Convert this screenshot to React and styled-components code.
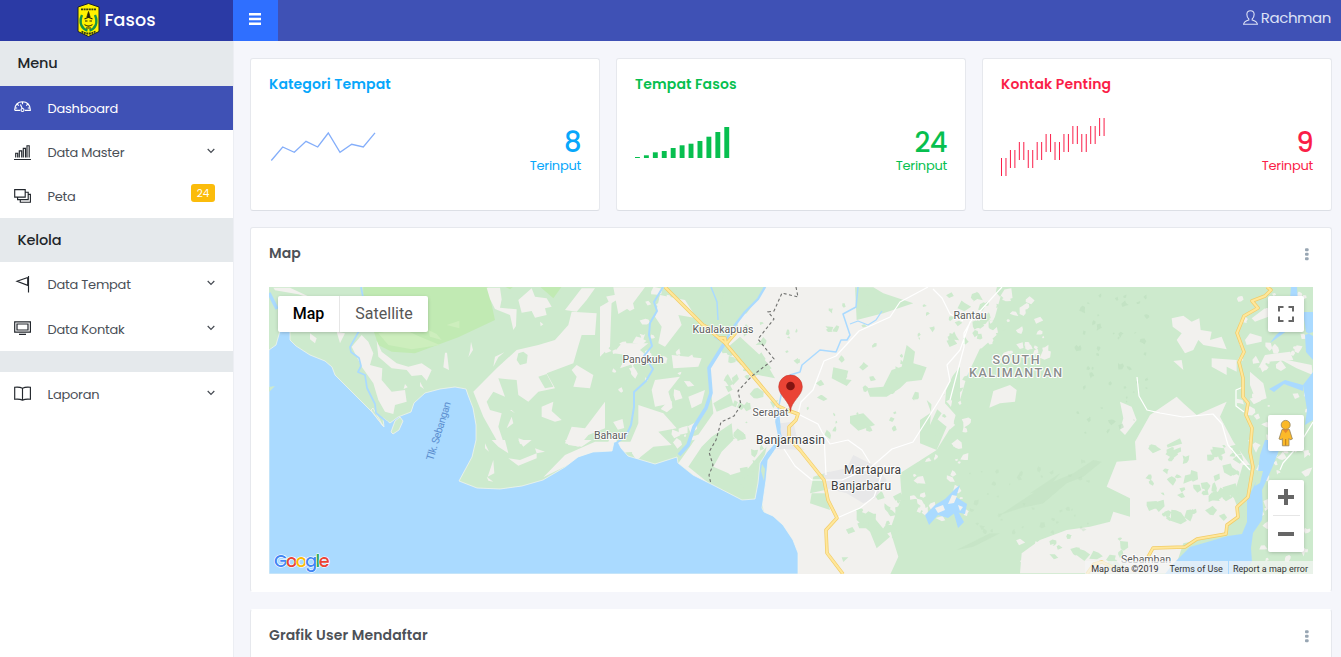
import React from 'react';
import styled, { createGlobalStyle } from 'styled-components';

const Global = createGlobalStyle`
  * { box-sizing: border-box; }
  body {
    margin: 0;
    background: #f5f6fb;
    font-family: Poppins, Inter, "Open Sans", sans-serif;
    font-size: 13px;
    color: #4d5157;
    overflow: hidden;
  }
`;

const Page = styled.div`
  display: flex;
  flex-direction: column;
  height: 657px;
  overflow: hidden;
`;
const Header = styled.header`
  display: flex;
  height: 41px;
  flex: none;
  background: #3f51b5;
`;
const Brand = styled.div`
  width: 233px;
  background: #2b3aa5;
  display: flex;
  justify-content: center;
  align-items: center;
  gap: 4px;
  padding-bottom: 2px;
  color: #fff;
  font-size: 17.5px;
  font-weight: 500;
  letter-spacing: 0.1px;
`;
const Toggle = styled.button`
  width: 45px;
  border: 0;
  padding: 13px 0 0 16px;
  background: #2f6fff;
  display: flex;
  align-items: flex-start;
`;
const User = styled.div`
  margin-left: auto;
  padding: 0 10px 6px 0;
  display: flex;
  align-items: center;
  gap: 3px;
  color: #dde1f5;
  font-size: 15px;
  letter-spacing: -0.42px;
`;
const Main = styled.div`
  display: flex;
  flex: 1;
  min-height: 0;
`;
const Sidebar = styled.nav`
  width: 234px;
  flex: none;
  background: #fff;
  border-right: 1px solid #eceef3;
`;
const Section = styled.div`
  height: ${(p) => p.$h}px;
  padding-left: 17.5px;
  line-height: 45px;
  background: #e5e9ec;
  color: #212529;
  font-size: 14.5px;
  font-weight: 500;
  letter-spacing: -0.15px;
`;
const Item = styled.a`
  height: ${(p) => p.$h || 44}px;
  padding: 0 18px 0 14px;
  display: flex;
  align-items: center;
  color: ${(p) => (p.$active ? '#fff' : '#4a4f57')};
  background: ${(p) => (p.$active ? '#3f51b5' : 'transparent')};
  svg { flex: none; }
`;
const ItemText = styled.span`
  margin-left: 15.5px;
  padding-top: 1px;
  flex: 1;
  letter-spacing: -0.24px;
`;
const Badge = styled.span`
  width: 24px;
  height: 18px;
  margin-bottom: 6px;
  border-radius: 3px;
  background: #fbbc0b;
  color: #fff;
  font-size: 10.5px;
  line-height: 19px;
  text-align: center;
`;
const Content = styled.main`
  flex: 1;
  padding: 17px 9px 0 16px;
  display: flex;
  flex-direction: column;
  min-width: 0;
`;
const Stats = styled.div`
  display: grid;
  grid-template-columns: repeat(3, 350px);
  gap: 16px;
  flex: none;
`;
const Card = styled.section`
  background: #fff;
  border: 1px solid #e6e8ed;
  border-radius: 3px;
  padding: 0 18px;
`;
const StatCard = styled(Card)`
  height: 153px;
  border-bottom-color: #dcdfe5;
  color: ${(p) => p.$color};
`;
const Title = styled.h4`
  margin: 0;
  padding-top: 15px;
  font-size: 14px;
  line-height: 21px;
  font-weight: 600;
  letter-spacing: 0.13px;
`;
const StatBody = styled.div`
  display: flex;
  justify-content: space-between;
  height: 90px;
  margin-top: 22px;
`;
const Figures = styled.div`
  text-align: right;
  padding-top: 10px;
`;
const Value = styled.div`
  font-size: 27.5px;
  line-height: 32px;
  font-weight: 500;
  letter-spacing: -0.6px;
`;
const Caption = styled.div`
  font-size: 13px;
  line-height: 16px;
  margin-top: -1px;
  letter-spacing: -0.25px;
`;
const MapCard = styled(Card)`
  height: 365px;
  margin-top: 16px;
  flex: none;
  border-bottom-color: #fff;
`;
const ChartCard = styled(Card)`
  height: 120px;
  margin-top: 17px;
  flex: none;
  border-top-color: #fff;
`;
const CardHead = styled.div`
  display: flex;
  justify-content: space-between;
  height: 59px;
  color: #4d5157;
`;
const MapFrame = styled.div`
  position: relative;
  width: 1044px;
  height: 287px;
  overflow: hidden;
  font-family: Roboto, sans-serif;
`;
const MapSvg = styled.svg`
  display: block;
  width: 1044px;
  height: 287px;
`;
const Overlay = styled.div`
  position: absolute;
  left: ${(p) => p.$x}px;
  top: ${(p) => p.$y}px;
  background: #fff;
  border-radius: 2px;
  box-shadow: 0 1px 4px -1px rgba(0, 0, 0, 0.3);
`;
const TypeSwitch = styled(Overlay)`
  display: flex;
  width: 150px;
  height: 36px;
  font-size: 16px;
  line-height: 36px;
`;
const TypeButton = styled.span`
  width: ${(p) => p.$w}px;
  text-align: center;
  color: ${(p) => (p.$on ? '#000' : '#565656')};
  font-weight: ${(p) => (p.$on ? 500 : 400)};
  border-left: ${(p) => (p.$on ? '0' : '1px solid #e6e6e6')};
`;
const Legal = styled.div`
  position: absolute;
  right: 0;
  bottom: 0;
  display: flex;
  height: 13px;
  font-size: 9px;
  line-height: 16px;
  color: #333;
  background: rgba(245, 245, 245, 0.7);
  span { padding: 0 5px 0 6px; white-space: nowrap; }
  span + span + span { border-left: 1px solid #aadaff; padding-left: 4px; }
`;

const Chevron = () => (
  <svg width="8" height="6" viewBox="0 0 8 6" style={{ marginBottom: 3 }}>
    <path d="M.7 1 4 4.3 7.3 1" fill="none" stroke="#454a52" strokeWidth="1.2" />
  </svg>
);
const Dots = () => (
  <svg width="4" height="13" viewBox="0 0 4 13" style={{ margin: '20px 4px 0 0' }}>
    <g fill="#98a6b3">
      <rect y=".2" width="3.600" height="3" rx="1" />
      <rect y="4.700" width="3.600" height="3" rx="1" />
      <rect y="9.200" width="3.600" height="3" rx="1" />
    </g>
  </svg>
);
const Glyph = ({ children, color = '#23272d' }) => (
  <svg width="18" height="18" viewBox="0 0 18 18" fill="none" stroke={color} strokeWidth="1.15">{children}</svg>
);
const icons = {
  dash: (
    <Glyph color="#fff">
      <path d="M.7 11.3C.5 6 4 2.7 8.5 2.7s8 3.3 7.8 8.6h-5.4M.7 11.3h5.4M8.5 3v2.3M3 5l1.8 1.6M14 5l-1.8 1.6M1.2 9h2M13.8 9h2M6.4 5.4l2 4.3" />
      <circle cx="8.5" cy="11" r="1.5" />
    </Glyph>
  ),
  bars: <Glyph><path d="M0 16.500h17M1.700 14.500V10.200h2v4.300M5.300 14.500V7.800h2.400v6.700M9.300 14.500V5.300h2.200v9.200M13 14.500V2.700h2.200v11.800" /></Glyph>,
  layers: <Glyph><path d="M.7 2.600h10.500v7.500H.7zM3.600 10.200v2.400h10.600V5.200h-2.900M6.300 12.700v2.500h10.100V7.400h-2.100" /></Glyph>,
  flag: <Glyph><path d="M14.500 0v16.500M13.700 1.500 3 5.300l10.700 4.100V1.500M3.400 5.300h1" /></Glyph>,
  tv: <Glyph><path d="M.7 1.800h15.700v10.400H.7zM3 4h11v6H3zM5 14.300h7" strokeWidth="1.200" /></Glyph>,
  book: <Glyph><path d="M8.500 3.200C6 2 3.500 2 .7 2.300v12c3-.3 5.200-.3 7.800.8 2.600-1.100 4.900-1.100 7.900-.8v-12c-3-.3-5.400-.3-7.900.9zv11.900" /></Glyph>,
};

const Crest = () => (
  <svg width="23" height="34" viewBox="0 0 23 34">
    <path d="M11.500 .5 22 4v24.500L11.500 33.500 1 28.500V4z" fill="#fff200" stroke="#1b1f2a" />
    <path d="M4 6.300h15M4.500 28.500l4.500 2h5l4.500-2" stroke="#333a10" strokeWidth="1.800" fill="none" strokeDasharray="2 .6" />
    <path d="M5 12C1.500 20 5 26 10.500 27.500M18 12c3.500 8 0 14-5.500 15.500" stroke="#159447" strokeWidth="2.400" fill="none" />
    <path d="M11.500 8.500 9.900 14h3.200z" fill="#26240a" stroke="#26240a" strokeWidth=".8" />
    <path d="M7.500 16l4-1.800 4 1.800M8 18h2.500M12.500 18H15M7.500 21.500c2 2.200 6 2.200 8 0M9 25h5" fill="none" stroke="#26240a" strokeWidth="1.100" />
  </svg>
);

const LineSpark = () => (
  <svg width="120" height="80" viewBox="269 117 120 80">
    <polyline fill="none" stroke="#84aefa" strokeWidth="1.300"
      points="271.300,160.500 282.700,147 294.300,152.300 306,141.300 317.700,147 328.300,133 340,152.300 351.700,144.300 363.300,147 375,132.800" />
  </svg>
);
const barTops = [157, 155.3, 152.3, 151, 148, 145.3, 143.7, 141, 136.7, 132, 127];
const BarSpark = () => (
  <svg width="120" height="80" viewBox="635 117 120 80">
    {barTops.map((y, i) => <rect key={i} x={635 + i * 8.93} y={y} width="4.900" height={158 - y} fill="#07bf4f" />)}
  </svg>
);
const stickTops = [158, 150, 142, 150, 142, 134, 142, 134, 126, 134, 126, 118];
const StickSpark = () => (
  <svg width="120" height="80" viewBox="1001 117 120 80">
    {stickTops.flatMap((y, i) => [0, 1].map((k) => (
      <rect key={`${i}-${k}`} x={1001 + (i * 2 + k) * 4.460} y={y} width="1" height="18" fill="#fa1e48" />
    )))}
  </svg>
);

// Small irregular land patches, generated from a fixed seed per area.
function patches(seed, [x0, y0, w, h], count, size) {
  let s = seed;
  const rnd = () => {
    s = (s * 16807) % 2147483647;
    return s / 2147483647;
  };
  let d = '';
  for (let i = 0; i < count; i += 1) {
    const cx = x0 + rnd() * w;
    const cy = y0 + rnd() * h;
    const n = 4 + Math.floor(rnd() * 4);
    const r = size * (0.35 + rnd());
    for (let k = 0; k < n; k += 1) {
      const a = (k / n) * 6.283 + rnd() * 0.7;
      const q = r * (0.35 + rnd() * 0.75);
      d += `${k ? 'L' : 'M'}${(cx + Math.cos(a) * q).toFixed(1)} ${(cy + Math.sin(a) * q).toFixed(1)}`;
    }
    d += 'z';
  }
  return d;
}

const GREEN = '#cdeacd';
const LAND = '#f2f1ee';
const WATER = '#aadaff';

const labels = [
  [723, 333, 'Kualakapuas', 10.6, 61],
  [643, 363, 'Pangkuh', 10.6, 41],
  [610.5, 439, 'Bahaur', 10.6, 33],
  [770.5, 416, 'Serapat', 10.6, 36],
  [970, 319, 'Rantau', 10.6, 33],
  [790.5, 444, 'Banjarmasin', 12, 69],
  [872.5, 474, 'Martapura', 12, 57],
  [861, 490, 'Banjarbaru', 12, 60],
  [1146, 563, 'Sebamban', 10.6, 50],
];

const MapDrawing = () => (
  <MapSvg viewBox="269 287 1044 287">
    <rect x="269" y="287" width="1044" height="287" fill={GREEN} />
    <g transform="translate(245 220) scale(.33333)">
      <path d="M355 200H728L750 300 640 352 510 400 440 395 400 375 385 330 355 250zM780 200h25l-10 8zM885 200h65l-25 35z" fill="#c1eab3" />
      <path d="M400 340 470 325 525 350 585 375 500 388 430 375zM550 330l25 12 15 18-35-10zM605 315l38-13v23z" fill="#cdeebd" />
      <g fill={LAND}>
        <path d="M85 203h50l85 40-60-20-70-12zM350 345 320 380 350 440 385 490 400 540 420 575 445 582 450 555 485 545 480 510 440 515 410 480 412 445 375 435 385 400 370 365z" />
        <path d="M395 362 410 395 455 430 490 440 530 430 560 450 545 482 530 465 500 468 485 450 440 445 400 410zM600 398l6 0 6 52-17-8zM678 365l6 25-14 22 5-20zM195 340l20 15-5 15-15-12zM275 335l25 5-15 30zM480 492l8 10-12 5zM525 485l12 22-12-8z" />
        <path d="M725 203h40l5 35-5 25 50 5-2 50-8 12-10-45-45-18-15-30zM820 240l40-35 10 25 35 5 15 25-20 5 5 20-35 8-10-20-30 5zM885 305l10 8-8 6z" />
        <path d="M980 275 1055 280 1050 345 1010 345 1000 378 985 430 905 460 930 505 880 515 850 545 820 525 815 480 760 475 780 530 745 515 725 545 735 570 770 580 760 620 780 680 760 670 715 590 685 515 755 445 815 390 880 375 930 360 970 315zM960 270 1010 205h40l-25 35-30 35zM745 440l5-30 28-13-18 15zM995 435l50 30-10 40-50-5 10-30-15-20zM890 560l35-15-5 28 30 27-20 5-40-15zM960 670l20-50 40 5 60-80v80l-50 20-30 35zM795 570l15 10-10-10zM800 590l5 20-20 15zM820 655l25 8-20 10zM720 670l12 25-12-10zM870 685l30 10-25 5z" />
      </g>
      <g transform="translate(0 660)" fill={LAND}>
        <path d="M740 0h40l10 40-30-20zM790 55l35 5 50-20v15l-55 22zM745 60l3 40-20 10zM725 110l20 15-15-3zM820 0h40l-25 20zM960 0h80l-30 20-40-5zM895 112 960 45 1050 5h120v30l-140 10zM925 60l-15 18z" />
      </g>
      <path d="M820 400 835 395 848 405 845 430 825 435 815 420zM880 470 905 462 925 500 900 505z" fill={GREEN} />
    </g>
    <g transform="translate(600 280) scale(.33333)">
      <path d="M500 20H1210L1185 110 1100 290 1060 430 1010 510 900 580 905 650 870 750 895 830 870 885H590L490 690 478 600 500 500 440 570 310 610 235 550 270 500 340 400 325 260 375 190 420 110z" fill={LAND} />
      <path d="M180 45 255 60 290 115 235 105 245 135 195 200 175 190 185 140 165 110zM65 190 145 190 120 210 150 235 60 265 80 225 40 220zM165 300 240 290 205 335 215 370 165 380 155 330zM115 375 190 400 230 445 175 455 215 495 160 500 110 540 85 500 115 430zM40 22h95l-45 60-35 20zM215 225l90 10-10 25-75 5zM265 350l50-20-10 40-30 15zM0 80 35 60 30 200 0 230z" fill={LAND} />
      <g fill={GREEN}>
        <path d="M375 20H498L440 100 405 115 360 100zM380 205 420 170 490 235 515 265 460 290 430 250zM340 370 390 340 400 375 350 395zM305 500 335 470 395 430 400 480 365 515 340 560 385 580 435 625 430 658 330 613 265 560z" />
        <path d="M700 262 745 272 738 298 755 300 740 318 695 295zM800 325 850 320 875 270 905 260 920 195 945 215 940 250 980 262 965 300 920 305 900 325 860 350 810 350zM750 408 790 400 825 435 775 452 750 430zM770 120 850 100 940 70 850 40 820 22 765 22zM1040 310l40-50v160l-45-50zM980 360l45 40-20 30zM960 420l30-20 50 40-30 70-50-20zM640 590l50-15-15 55-45 10zM635 640l45 0 10 50-60-20zM770 690l50 20 50 60-40 35-20-50-40-35zM725 832h20l-15 14zM505 260l20 35-60-12zM510 365l25-5-15 25z" />
        <path d={patches(91, [560, 40, 570, 430], 58, 12)} />
        <path d={patches(17, [380, 80, 110, 520], 35, 18)} />
        <path d={patches(36, [750, 620, 160, 180], 20, 18)} />
      </g>
      <path d={patches(55, [20, 35, 280, 490], 44, 17)} fill={LAND} />
      <path d={patches(812, [940, 360, 160, 360], 34, 16)} fill={LAND} />
      <path d="M540 430 580 425 590 470 570 480 615 510 530 507zM670 580 740 565 760 525 830 560 860 600 825 655 790 670 740 640 680 625z" fill="#e8e8e9" />
    </g>
    <g transform="translate(950 225) scale(.33333)">
      <path d="M-30 185H160L110 260 140 330 95 370 40 380 0 470-60 600z" fill={LAND} />
      <path d={patches(77, [0, 190, 155, 180], 28, 17)} fill={GREEN} />
      <path d={patches(28, [120, 205, 170, 190], 28, 15)} fill={LAND} />
      <g fill={LAND}>
        <path d="M130 498 180 480 200 495 195 530 150 535 118 548zM665 280 700 272 725 290 748 280 752 315 785 320 780 345 815 335 830 373 760 360 745 345 730 375 705 385 680 345 695 325 668 305zM510 530 545 545 560 585 525 630 510 615 520 580zM785 400 860 405 860 440 830 425 830 450 785 425zM670 408 695 405 700 435zM905 280 945 250 955 275 915 290zM885 345 900 325 935 335 935 350 890 360zM925 430 945 390 1020 380 1030 405 955 410zM900 440 940 475 950 520 920 530 900 480zM985 400 1085 420 1088 450 1040 430z" />
        <path d="M555 650 600 570 680 515 700 535 740 570 830 530 810 575 850 650 900 720H560zM600 620l-20 40-20 0z" />
      </g>
      <path d="M690 640 700 665 740 690 720 740 665 700 650 660z" fill={GREEN} />
      <path d={patches(314, [870, 200, 210, 520], 42, 14)} fill={LAND} />
      <path d={patches(41, [380, 200, 210, 430], 48, 9)} fill="#bddfbe" opacity=".65" />
    </g>
    <g transform="translate(950 440) scale(.33333)">
      <path d="M500 65 560 60 610 75 610 35 700 10 820 0 850 30 880 70 850 170 870 220 830 260 820 285 700 310 670 400H210L215 340 270 300 350 270 420 260 480 245 490 215 540 230 540 175 470 140z" fill={LAND} />
      <path d={patches(64, [600, 10, 280, 240], 62, 21)} fill={GREEN} />
      <path d={patches(87, [310, 245, 230, 140], 18, 20)} fill={GREEN} />
      <path d={patches(47, [930, 20, 150, 350], 30, 14)} fill={LAND} />
      <path d={patches(8, [210, 300, 120, 90], 15, 17)} fill={LAND} />
      <path d="M150 225 240 165 310 125 370 100 430 60 455 65 400 110 350 130 280 190 210 205zM240 160l90-60-40 50zM20 330l100-50 30 0-80 40z" fill="#bddfbe" opacity=".4" />
      <path d={patches(9, [60, 60, 360, 220], 40, 9)} fill="#bddfbe" opacity=".4" />
    </g>

    <g fill={WATER}>
      <path d="M269 350 276 345 280 331H290V340L296 346 310 355 325 361 332 367 335 375 350 390 362 402 372 412 380 422 384 427 383 418 390 423 398 417 411 412 414 403 425 393 440 389 455 387 466 389 468 395 473 408 476 425 476 440 472 457 459 481 477 488 500 489 522 486 543 480 565 467 578 457 593 452 612 451 614 442H618L621 448 628 456 655 464 677 457 678 463 693 475 711 484 742 500 755 499 758 483 760 463 767 452 775 443 777 447 768 460 766 480 762 508 764 512 773 516 783 525 793 540 798 553V574H269z" stroke="#f6f6ee" strokeWidth=".7" />
      <path d="M1172 565 1190 547 1228 536 1242 534 1247 522 1247 500 1257 480 1260 455 1265 440H1283L1272 468 1262 490 1263 510 1262 520 1253 533 1251 548 1252 562 1240 574H1165zM1313 312 1303 312 1306 332 1313 336zM1291 287h6l1 16-8-4zM1303 312 1302 320 1270 343 1276 335 1300 315zM1305 335 1313 332V360L1306 352zM1313 372 1303 385 1307 410 1305 425 1313 420zM1303 385 1285 380 1269 389 1274 392 1284 384 1303 391z" />
      <path d="M925 515 935 505 945 499 955 489 960 485 956 497 967 504 965 514 956 512 948 518 938 515 929 525zM955 506l9 16-6 6-4-14z" />
    </g>
    <path d="M935 508l8-3 2 5-7 3zM952 495l5 1-3 7-6 1zM958 505l5 2-3 4z" fill={LAND} />
    <path d="M391 432 395 421 400 417 403 421 399 430 393 434zM373 408 383 426 371 410z" fill={GREEN} stroke={LAND} strokeWidth=".8" />
    <path d="M269 387 275 386 269 392z" fill={GREEN} />
    <path d="M762 464l3 5-1 12-3-10zM1258 471l5 0-3 12-5 3z" fill={GREEN} />
    <g fill="none" stroke={WATER} strokeLinejoin="round">
      <path d="M269 293 277 309" strokeWidth="3.500" />
      <path d="M361 287 363 297M359 331 350 347 351 352 359 358 361 366 358 372 365 375 367 388 375 404 376 413 388 423" strokeWidth="1.700" />
      <path d="M663 287 654 302 657 311 650 323 649 335 652 346 644 356 653 369 646 381 634 392 634 407 631 425 626 436 615 444" strokeWidth="2" />
      <path d="M765 287 758 299 745 312 735 325 722 347" strokeWidth="2.400" />
      <path d="M724 344 709 368 711 393 706 408 694 427 688 445 679 455" strokeWidth="3.600" />
      <path d="M711 287 717 302 718 320M858 287 856 307 843 314 850 335 847 340 841 340 836 352 820 350 802 365 800 372 790 375 782 391 778 410 780 427 777 443" strokeWidth="1.500" />
      <path d="M778 410 777 422 780 437 777 447" strokeWidth="3.600" />
      <path d="M850 324l8-3 10 4 8-5 6-9M714 337l10 6" strokeWidth="1.300" />
    </g>
    <g fill="none" stroke="#fff" strokeWidth="1.200" strokeLinejoin="round">
      <path d="M928 287 900 302 890 317 859 331 836 356 824 361 813 390 801 402 798 414 818 424 822 432 830 444 848 440 862 450 870 463M784 449 795 466 812 480 842 480 870 468 892 449 913 442 925 423 940 399 950 381 947 365 960 350 970 322 1002 287M824 435 826 475M837 518 860 508 874 497 885 465M933 289 942 298 950 314 963 321M950 400 964 347 964 333 975 314" />
      <path d="M1137 377 1139 396 1147 410 1160 413 1183 417 1213 414 1222 424 1228 445 1239 458 1250 470M1243 387 1236 390 1236 406 1244 412M1313 422 1299 445 1283 463 1280 470" />
    </g>
    {[['#f1cc69', 3.5], ['#ffe79a', 2.1]].map(([c, w]) => (
      <g key={c} fill="none" stroke={c} strokeWidth={w} strokeLinejoin="round">
        <path d="M665 287 703 325 725 343 752 375 778 406 787 410 798 414 796 420 789 427 789 438 800 450 824 480 828 500 837 518 826 530 827 553 843 574" />
        <path d="M703 325 709 328M718 338 725 338 726 344 738 330" />
        <path d="M1267 287 1271 290 1265 296 1252 301 1258 308 1244 316 1237 333 1244 352 1239 362 1243 378 1243 397 1248 403 1246 415 1252 428 1250 452 1253 467 1248 497 1237 507 1238 517 1227 525 1226 534 1197 539 1185 547 1153 548 1148 557M1112 567 1102 562 1094 564 1087 574" />
      </g>
    ))}
    <path d="M796 287 798 297 782 293 774 311 768 312 774 319 758 339 774 359 752 376 738 391 741 405 734 416 721 422 716 440 709 452 713 465 709 475 711 484" fill="none" stroke="#70716f" strokeWidth="1.100" strokeDasharray="3 2.500" />

    <g fontFamily="Roboto, sans-serif" textAnchor="middle" strokeLinejoin="round">
      {labels.map(([x, y, t, size, w]) => (
        <text key={t} x={x} y={y} fontSize={size} textLength={w} fill={size > 11 ? '#3d3d3d' : '#5c5c5c'}
          stroke="#fff" strokeWidth="2" strokeOpacity=".85" paintOrder="stroke">{t}</text>
      ))}
      <g fontSize="12.500" fontWeight="500" fill="#8b8e8d" stroke="#fff" strokeWidth="2.200" paintOrder="stroke">
        <text x="1016" y="364" textLength="47">SOUTH</text>
        <text x="1015.500" y="377" textLength="93">KALIMANTAN</text>
      </g>
      <text transform="translate(442 432) rotate(-73)" fontSize="10.500" textLength="61" fill="#5c8fd0">Tlk. Sebangan</text>
    </g>

    <path d="M790.500 411.500C790 401 778.700 396 778.700 386.800a11.800 11.800 0 0 1 23.600 0C802.300 396 791 401 790.500 411.500z" fill="#ea4335" stroke="#c5352a" strokeWidth=".6" />
    <circle cx="790.500" cy="386" r="4.300" fill="#811411" />
    <text x="274" y="567" fontFamily="Poppins, Lato, sans-serif" fontSize="17.500" textLength="55.500" stroke="#fff" strokeWidth="1.200" strokeLinejoin="round" fontWeight="500" paintOrder="stroke">
      <tspan fill="#4285f4">G</tspan><tspan fill="#ea4335">o</tspan><tspan fill="#fbbc05">o</tspan><tspan fill="#4285f4">g</tspan><tspan fill="#34a853">l</tspan><tspan fill="#ea4335">e</tspan>
    </text>
  </MapSvg>
);

const Pegman = () => (
  <svg width="36" height="36" viewBox="0 0 36 36" style={{ display: 'block' }}>
    <path d="M14 14.500h7.400l3 9.500-2.300.8-1.100-1.300v7.300h-6.600v-7.300l-1.100 1.300-2.300-.8z" fill="#fbb929" stroke="#94825c" strokeWidth=".8" />
    <circle cx="17.700" cy="9.900" r="4.500" fill="#fbb929" stroke="#94825c" strokeWidth=".8" />
    <path d="M14.500 14.500h6.400l-3.200 3.800z" fill="#e68a2e" />
    <path d="M17.700 24v6.500" stroke="#b87a1b" />
  </svg>
);

const Row = ({ icon, text, badge, active, h }) => (
  <Item $active={active} $h={h}>
    {icons[icon]}
    <ItemText>{text}</ItemText>
    {badge ? <Badge>{badge}</Badge> : !active && <Chevron />}
  </Item>
);

const Stat = ({ color, title, value, children }) => (
  <StatCard $color={color}>
    <Title>{title}</Title>
    <StatBody>
      {children}
      <Figures>
        <Value>{value}</Value>
        <Caption>Terinput</Caption>
      </Figures>
    </StatBody>
  </StatCard>
);

export default function App() {
  return (
    <Page>
      <Global />
      <Header>
        <Brand><Crest />Fasos</Brand>
        <Toggle aria-label="Menu">
          <svg width="12" height="12" viewBox="0 0 12 12"><path d="M0 0h12v2.600H0zM0 4.700h12v2.600H0zM0 9.400h12V12H0z" fill="#fff" /></svg>
        </Toggle>
        <User>
          <svg width="15" height="15" viewBox="0 0 15 15" fill="none" stroke="currentColor" strokeWidth="1.100">
            <path d="M5.800 9C4.200 7.800 3.800 6 3.900 4 4 1.800 5.500.7 7.500.7s3.500 1.100 3.600 3.300c.1 2-.3 3.800-1.900 5v1c2.500.7 4.700 1.500 5.200 4.200H.6C1.100 11.500 3.300 10.700 5.800 10z" />
          </svg>
          Rachman
        </User>
      </Header>
      <Main>
        <Sidebar>
          <Section $h={45}>Menu</Section>
          <Row icon="dash" text="Dashboard" active />
          <Row icon="bars" text="Data Master" />
          <Row icon="layers" text="Peta" badge="24" />
          <Section $h={44}>Kelola</Section>
          <Row icon="flag" text="Data Tempat" h={45} />
          <Row icon="tv" text="Data Kontak" />
          <Section $h={21} />
          <Row icon="book" text="Laporan" />
        </Sidebar>
        <Content>
          <Stats>
            <Stat color="#07a7fb" title="Kategori Tempat" value="8"><LineSpark /></Stat>
            <Stat color="#07bf4f" title="Tempat Fasos" value="24"><BarSpark /></Stat>
            <Stat color="#fa1e48" title="Kontak Penting" value="9"><StickSpark /></Stat>
          </Stats>
          <MapCard>
            <CardHead><Title>Map</Title><Dots /></CardHead>
            <MapFrame>
              <MapDrawing />
              <TypeSwitch $x={9} $y={9}>
                <TypeButton $w={61} $on>Map</TypeButton>
                <TypeButton $w={89}>Satellite</TypeButton>
              </TypeSwitch>
              <Overlay $x={999} $y={9}>
                <svg width="36" height="36" viewBox="0 0 36 36" style={{ display: 'block' }}>
                  <path d="M11 15.500v-4.500h4.500M20.500 11h4.500v4.500M25 20.500v4.500h-4.500M15.500 25h-4.500v-4.500" fill="none" stroke="#666" strokeWidth="2" />
                </svg>
              </Overlay>
              <Overlay $x={999} $y={128}><Pegman /></Overlay>
              <Overlay $x={999} $y={193}>
                <svg width="36" height="72" viewBox="0 0 36 72" style={{ display: 'block' }}>
                  <path d="M10 17h16M18 9v16M10 54h16" stroke="#666" strokeWidth="4" />
                  <path d="M5 35.500h27" stroke="#e6e6e6" />
                </svg>
              </Overlay>
              <Legal><span>Map data ©2019</span><span>Terms of Use</span><span>Report a map error</span></Legal>
            </MapFrame>
          </MapCard>
          <ChartCard>
            <CardHead><Title>Grafik User Mendaftar</Title><Dots /></CardHead>
          </ChartCard>
        </Content>
      </Main>
    </Page>
  );
}
